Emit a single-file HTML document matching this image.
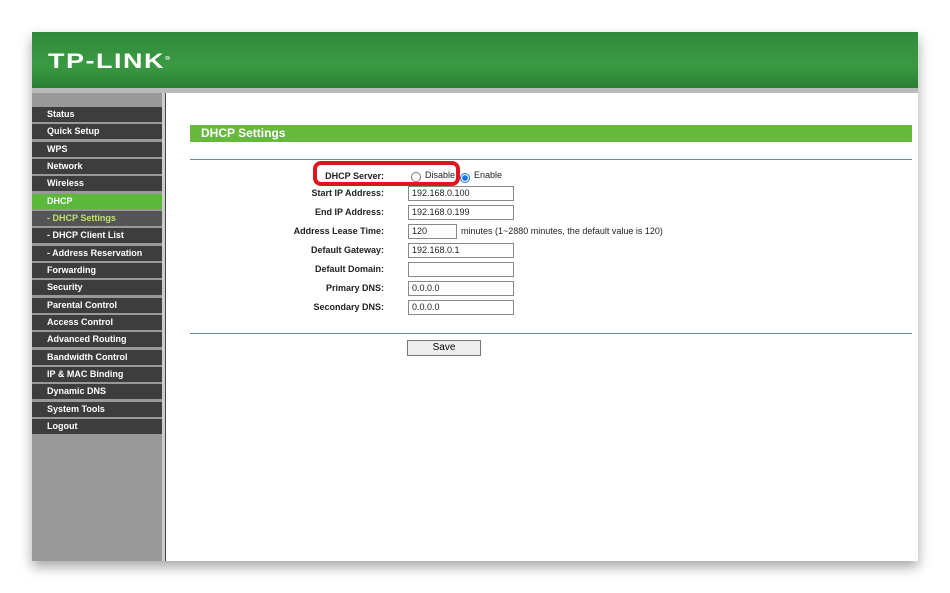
<html><head><style>
body{margin:0;background:#fff;width:950px;height:593px;position:relative;font-family:"Liberation Sans",Arial,sans-serif;overflow:hidden}
#frame{position:absolute;left:32px;top:32px;width:886px;height:529px;background:#fff;box-shadow:0 6px 12px rgba(0,0,0,.35)}
#hdr{position:absolute;left:0;top:0;width:886px;height:56px;background:linear-gradient(#2f8a3a,#3a9a42 60%,#2a7f33)}
#hdr span{position:absolute;left:16px;top:17px;color:#fff;font:900 27px "Liberation Sans",sans-serif;letter-spacing:1.5px;transform:scaleY(0.8);transform-origin:left top}
#strip{position:absolute;left:0;top:56px;width:886px;height:5px;background:#bbb}
#side{position:absolute;left:0;top:61px;width:130px;height:468px;background:#999}
#sep{position:absolute;left:130px;top:61px;width:3px;height:468px;background:#ccc;border-right:1px solid #444}
.m{position:absolute;left:0;width:130px;height:15px;background:#3d3d3d;color:#fff;font:bold 9px "Liberation Sans",sans-serif;line-height:15px;text-indent:15px}
.g{background:#5ab83a}.s{background:#555;color:#bfe36a}
#main{position:absolute;left:134px;top:61px;width:752px;height:468px;background:#fff}
.bar{position:absolute;left:24px;top:32px;width:722px;height:17px;background:#67b93d;color:#fff;font:bold 12px "Liberation Sans";line-height:17px;text-indent:11px}
.hr{position:absolute;left:24px;width:722px;height:1px;background:#5d9a80}
.l{position:absolute;right:534px;font:bold 9px "Liberation Sans";color:#222}
.in{position:absolute;left:242px;height:13px;border:1px solid #888;background:#fff;font:9px "Liberation Sans";line-height:13px;padding-left:3px;color:#222}
.t{position:absolute;font:9px "Liberation Sans";color:#222}
</style></head><body><div id="frame">
<div id="hdr"><span>TP-LINK<sup style="font-size:7px">®</sup></span></div>
<div id="strip"></div>
<div id="side"></div><div id="sep"></div>
<div class="m" style="top:75px">Status</div>
<div class="m" style="top:92px">Quick Setup</div>
<div class="m" style="top:110px">WPS</div>
<div class="m" style="top:127px">Network</div>
<div class="m" style="top:144px">Wireless</div>
<div class="m g" style="top:162px">DHCP</div>
<div class="m s" style="top:179px">- DHCP Settings</div>
<div class="m" style="top:196px">- DHCP Client List</div>
<div class="m" style="top:214px">- Address Reservation</div>
<div class="m" style="top:231px">Forwarding</div>
<div class="m" style="top:248px">Security</div>
<div class="m" style="top:266px">Parental Control</div>
<div class="m" style="top:283px">Access Control</div>
<div class="m" style="top:300px">Advanced Routing</div>
<div class="m" style="top:318px">Bandwidth Control</div>
<div class="m" style="top:335px">IP &amp; MAC Binding</div>
<div class="m" style="top:352px">Dynamic DNS</div>
<div class="m" style="top:370px">System Tools</div>
<div class="m" style="top:387px">Logout</div>
<div id="main">
<div class="bar">DHCP Settings</div>
<div class="hr" style="top:66px"></div>
<div class="l" style="top:78px">DHCP Server:</div>
<div style="position:absolute;left:245px;top:79px;width:8px;height:8px;border:1px solid #777;border-radius:50%"></div>
<div class="t" style="left:259px;top:77px">Disable</div>
<div style="position:absolute;left:294px;top:80px;width:8px;height:8px;border:1px solid #1a73e8;border-radius:50%;background:radial-gradient(#1a73e8 45%,#fff 55%)"></div>
<div class="t" style="left:308px;top:77px">Enable</div>
<div style="position:absolute;left:147px;top:68px;width:139px;height:17px;border:4px solid #e0141e;border-radius:8px"></div>
<div class="l" style="top:95px">Start IP Address:</div><div class="in" style="top:93px;width:101px">192.168.0.100</div>
<div class="l" style="top:114px">End IP Address:</div><div class="in" style="top:112px;width:101px">192.168.0.199</div>
<div class="l" style="top:133px">Address Lease Time:</div><div class="in" style="top:131px;width:44px">120</div>
<div class="t" style="left:295px;top:133px">minutes (1~2880 minutes, the default value is 120)</div>
<div class="l" style="top:152px">Default Gateway:</div><div class="in" style="top:150px;width:101px">192.168.0.1</div>
<div class="l" style="top:171px">Default Domain:</div><div class="in" style="top:169px;width:101px"></div>
<div class="l" style="top:190px">Primary DNS:</div><div class="in" style="top:188px;width:101px">0.0.0.0</div>
<div class="l" style="top:209px">Secondary DNS:</div><div class="in" style="top:207px;width:101px">0.0.0.0</div>
<div class="hr" style="top:240px"></div>
<div style="position:absolute;left:241px;top:247px;width:72px;height:14px;border:1px solid #777;background:#eee;font:10px 'Liberation Sans';text-align:center;line-height:14px">Save</div>
</div>
</div></body></html>
